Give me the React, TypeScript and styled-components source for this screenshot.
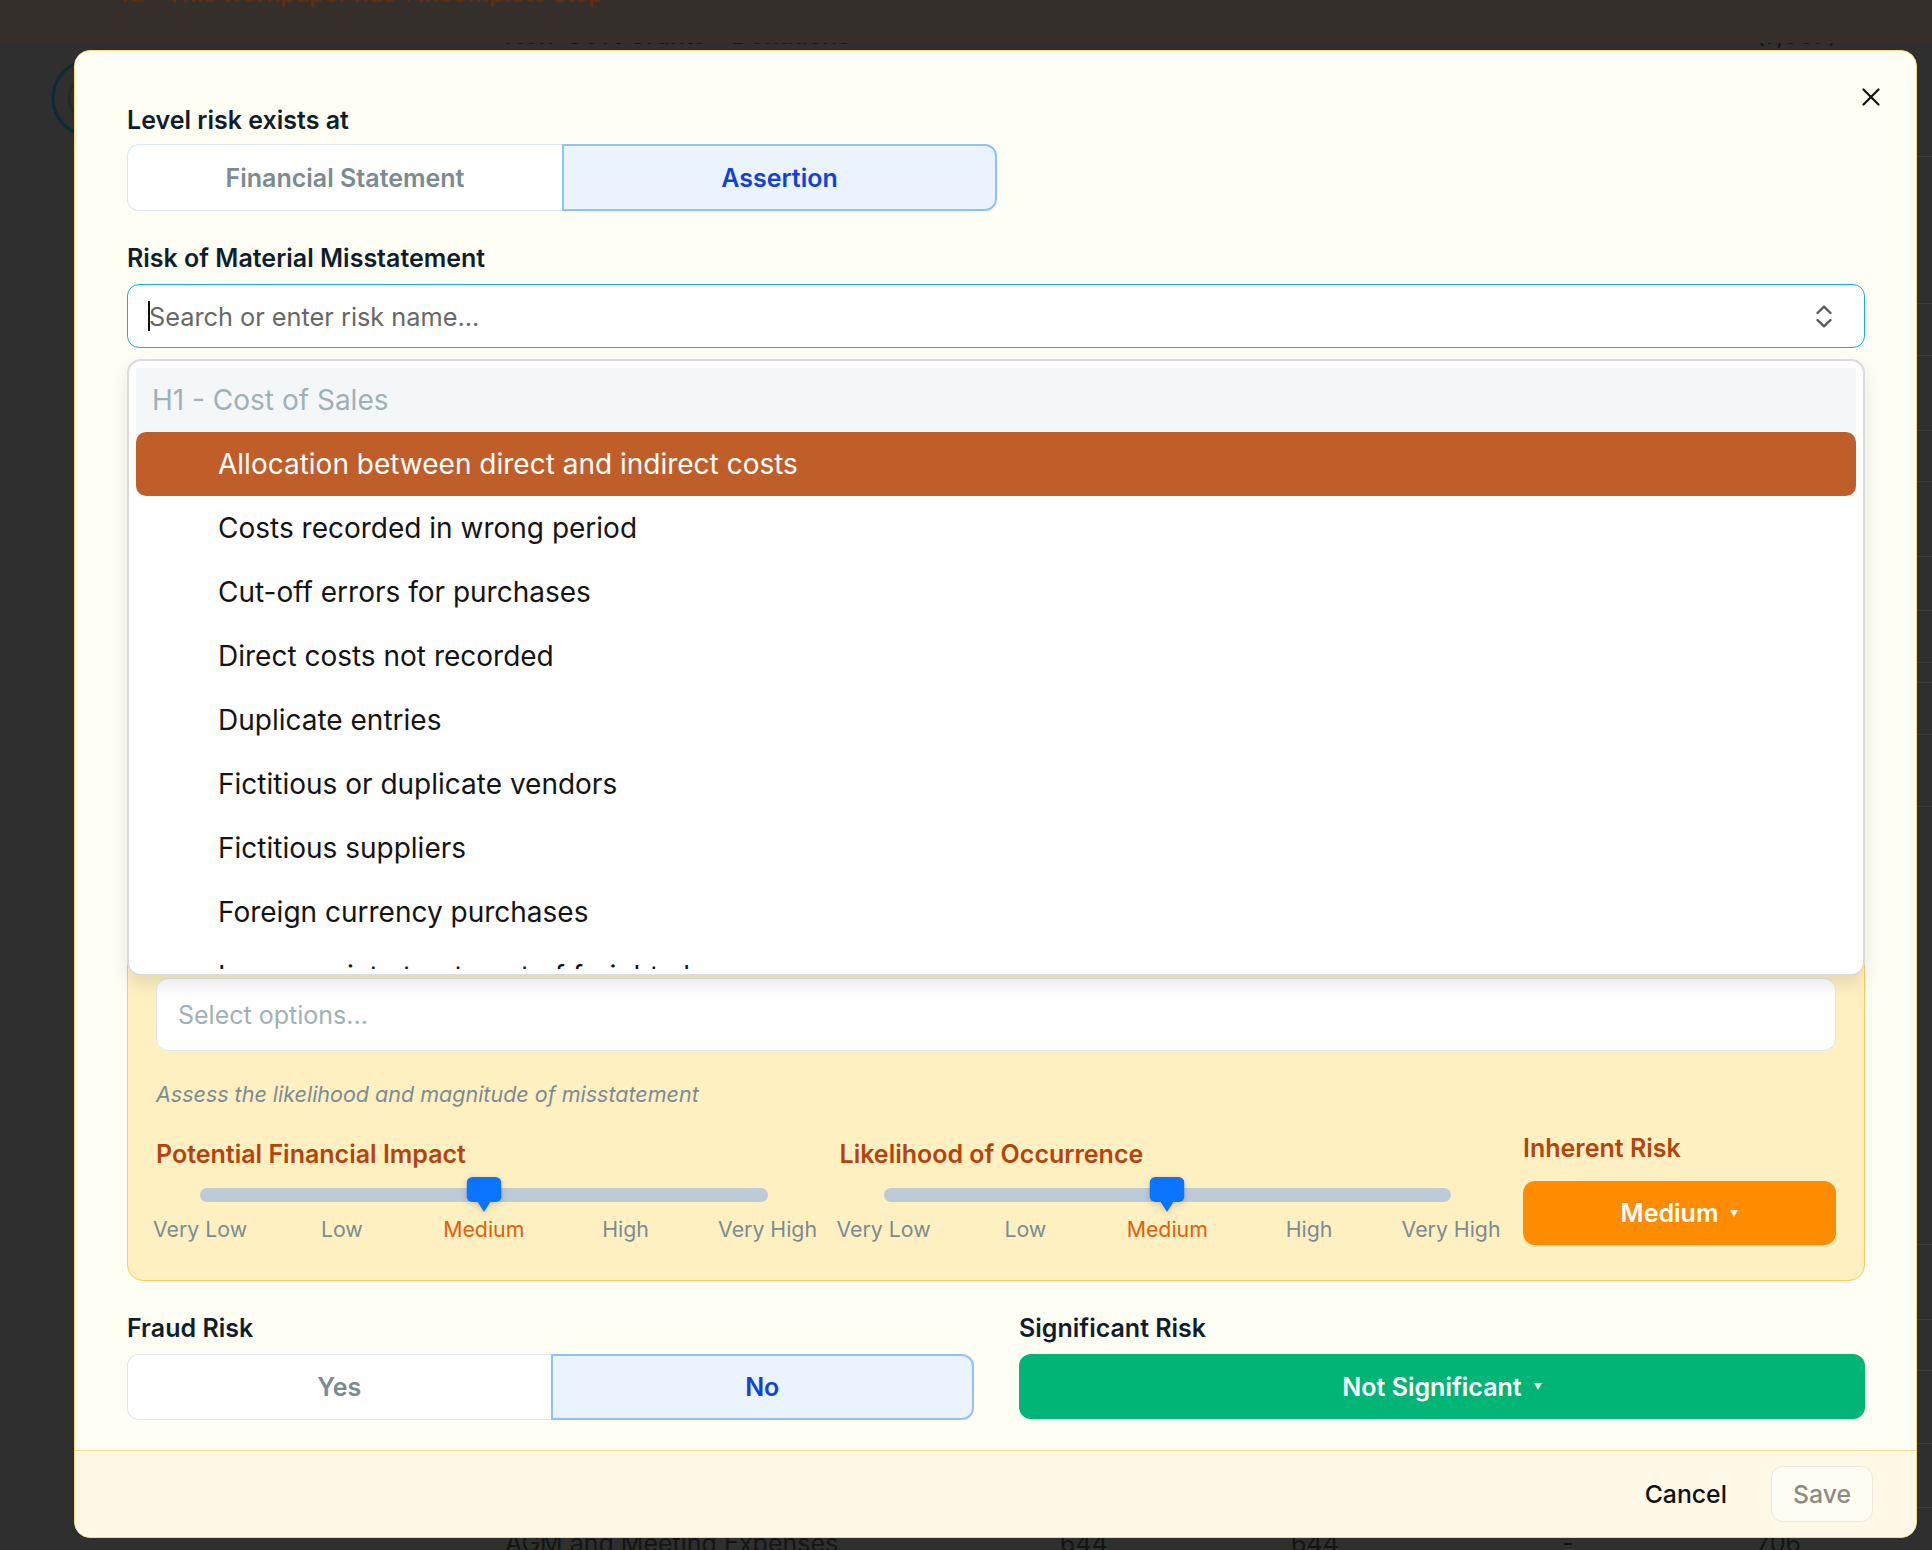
import React from "react";
import styled, { createGlobalStyle } from "styled-components";

const GlobalStyle = createGlobalStyle`
  html, body { margin: 0; padding: 0; }
  body {
    width: 1932px;
    height: 1550px;
    overflow: hidden;
    background: #2e2f2e;
    font-family: Inter, "Noto Sans", "Liberation Sans", sans-serif;
  }
  * { box-sizing: border-box; }
`;

/* ---------- background page ---------- */

const Page = styled.div`
  position: relative;
  width: 1932px;
  height: 1550px;
  overflow: hidden;
  background: #2e2f2e;
  display: flex;
  flex-direction: column;
`;

const TopBar = styled.div`
  position: relative;
  z-index: 1;
  height: 43px;
  flex: none;
  background: #352f2b;
  display: flex;
  align-items: flex-start;
  padding-left: 120px;
  overflow: hidden;
`;

const TopBarInner = styled.div`
  margin-top: -22px;
  display: flex;
  align-items: center;
  gap: 20px;
  color: #5e2e10;
  font-size: 24px;
  font-weight: 600;
  line-height: 32px;
`;

const MainArea = styled.div`
  flex: 1;
  display: flex;
  min-height: 0;
`;

const Rail = styled.div`
  width: 100px;
  flex: none;
  padding-top: 14px;
  padding-left: 50px;
`;

const Table = styled.div`
  flex: 1;
  display: flex;
  flex-direction: column;
`;

const TRow = styled.div<{ $h: number; $top?: boolean }>`
  height: ${(p) => p.$h}px;
  flex: none;
  border-bottom: 1px solid #3a3b3a;
  display: grid;
  grid-template-columns: 405px 555px 231px 271px 194px 1fr;
  align-items: ${(p) => (p.$top ? "start" : "center")};
  color: #151515;
  font-size: 25px;
  line-height: 30px;
  white-space: nowrap;
`;

const TCell = styled.div<{ $lift?: boolean }>`
  margin-top: ${(p) => (p.$lift ? "-23px" : "0")};
`;

/* ---------- modal ---------- */

const Modal = styled.div`
  position: absolute;
  left: 74px;
  top: 50px;
  width: 1843px;
  background: #fffef5;
  border: 1px solid #f6dc7c;
  border-radius: 16px;
  overflow: hidden;
  display: flex;
  flex-direction: column;
  z-index: 2;
  font-family: Inter, "Noto Sans", "Liberation Sans", sans-serif;
`;

const CloseButton = styled.button`
  position: absolute;
  top: 37px;
  right: 36px;
  width: 18px;
  height: 18px;
  padding: 0;
  border: none;
  background: transparent;
  display: flex;
  cursor: pointer;
`;

const Body = styled.div`
  padding: 53px 51px 30px 52px;
  display: flex;
  flex-direction: column;
  gap: 31px;
`;

const Field = styled.div<{ $gap?: number }>`
  display: flex;
  flex-direction: column;
  gap: ${(p) => (p.$gap ?? 10)}px;
`;

const Label = styled.div`
  font-size: 25px;
  font-weight: 600;
  line-height: 32px;
  color: #0f1e2c;
`;

const Segmented = styled.div<{ $width: number; $height: number }>`
  display: grid;
  grid-template-columns: 1fr 1fr;
  width: ${(p) => p.$width}px;
  height: ${(p) => p.$height}px;
`;

const Segment = styled.button<{ $active?: boolean; $first?: boolean }>`
  font-family: inherit;
  font-size: 25px;
  font-weight: 600;
  padding: 0;
  cursor: pointer;
  border-radius: ${(p) => (p.$first ? "12px 0 0 12px" : "0 12px 12px 0")};
  border: ${(p) => (p.$active ? "2.5px solid #8fc2fb" : "1.5px solid #dde8ef")};
  ${(p) => (p.$first && !p.$active ? "border-right: none;" : "")}
  background: ${(p) => (p.$active ? "#eaf3fe" : "#ffffff")};
  color: ${(p) => (p.$active ? "#1142d8" : "#7a8b91")};
`;

const ComboWrap = styled.div`
  position: relative;
`;

const ComboInput = styled.div`
  height: 64px;
  border: 1.5px solid #14b1d8;
  border-radius: 12px;
  background: #ffffff;
  display: flex;
  align-items: center;
  justify-content: space-between;
  padding: 0 32px 0 20px;
`;

const Placeholder = styled.span`
  display: flex;
  align-items: center;
  font-size: 25.3px;
  color: #676767;
`;

const Caret = styled.span`
  display: inline-block;
  width: 2px;
  height: 30px;
  background: #111;
  margin-right: -1px;
`;

const Dropdown = styled.div`
  position: absolute;
  left: 0;
  right: 0;
  top: calc(100% + 11px);
  background: #ffffff;
  border: 2px solid #dcdcdc;
  border-radius: 14px;
  padding: 7px 7px 5px;
  box-shadow: 0 8px 18px rgba(0, 0, 0, 0.1);
  z-index: 5;
`;

const OptionList = styled.div`
  height: 601px;
  overflow: hidden;
`;

const GroupHeader = styled.div`
  height: 64px;
  background: #f4f7f9;
  padding-left: 16px;
  display: flex;
  align-items: center;
  font-size: 28px;
  color: #9fb0b7;
`;

const Option = styled.div<{ $active?: boolean }>`
  height: 64px;
  padding-left: 82px;
  border-radius: 10px;
  display: flex;
  align-items: center;
  font-size: 28px;
  white-space: nowrap;
  color: ${(p) => (p.$active ? "#ffffff" : "#141414")};
  background: ${(p) => (p.$active ? "#c05e2a" : "transparent")};
`;

const Panel = styled.div`
  background: #fff0c2;
  border: 1px solid #f8cf55;
  border-radius: 16px;
  padding: 28px 28px 37px;
  display: flex;
  flex-direction: column;
  gap: 28px;
`;

const TextArea = styled.div<{ $h: number }>`
  height: ${(p) => p.$h}px;
  background: #ffffff;
  border: 1px solid #dfe8ee;
  border-radius: 12px;
`;

const SelectBox = styled.div`
  height: 73px;
  background: #ffffff;
  border: 1px solid #dfe8ee;
  border-radius: 12px;
  display: flex;
  align-items: center;
  padding-left: 21px;
  font-size: 25px;
  color: #9fb1b8;
`;

const Hint = styled.div`
  font-size: 21.5px;
  font-style: italic;
  line-height: 31px;
  color: #7b8c92;
`;

const SliderRow = styled.div`
  display: grid;
  grid-template-columns: 1fr 1fr 313px;
  column-gap: 28px;
  align-items: start;
`;

const SliderGroup = styled.div`
  display: flex;
  flex-direction: column;
`;

const GroupLabel = styled.div`
  font-size: 25px;
  font-weight: 600;
  line-height: 32px;
  color: #b4440e;
  white-space: nowrap;
`;

const SliderArea = styled.div`
  position: relative;
  height: 35px;
  margin: 7px 44px 0;
`;

const Track = styled.div`
  position: absolute;
  left: 0;
  right: 0;
  top: 11px;
  height: 14px;
  border-radius: 7px;
  background: #bdcad7;
`;

const Thumb = styled.div`
  position: absolute;
  top: 0;
  width: 35px;
  height: 35px;
  transform: translateX(-50%);
  filter: drop-shadow(0 2px 3px rgba(0, 0, 0, 0.18));
  display: flex;
`;

const Ticks = styled.div`
  display: flex;
  justify-content: space-between;
  margin-top: 4px;
`;

const Tick = styled.div<{ $active?: boolean }>`
  width: 88px;
  display: flex;
  justify-content: center;
  white-space: nowrap;
  font-size: 21.3px;
  line-height: 27px;
  color: ${(p) => (p.$active ? "#e0600b" : "#7b8c92")};
`;

const InherentCol = styled.div`
  margin: -6px 0 -2px;
  display: flex;
  flex-direction: column;
  gap: 17px;
`;

const PillButton = styled.button<{ $bg: string; $h: number }>`
  height: ${(p) => p.$h}px;
  width: 100%;
  border: none;
  border-radius: 12px;
  background: ${(p) => p.$bg};
  color: #ffffff;
  font-family: inherit;
  font-size: 25px;
  font-weight: 600;
  display: flex;
  align-items: center;
  justify-content: center;
  gap: 12px;
  cursor: pointer;
`;

const BottomRow = styled.div`
  display: grid;
  grid-template-columns: 1fr 1fr;
  column-gap: 45px;
`;

const Footer = styled.div`
  height: 87px;
  border-top: 1px solid #fbe08a;
  background: #fff8e6;
  display: flex;
  align-items: center;
  justify-content: flex-end;
  gap: 22px;
  padding-right: 43px;
`;

const GhostButton = styled.button`
  height: 56px;
  padding: 0 22px;
  border: none;
  background: transparent;
  font-family: inherit;
  font-size: 24.8px;
  font-weight: 500;
  color: #111111;
  cursor: pointer;
`;

const SaveButton = styled.button`
  height: 56px;
  padding: 0 21px;
  border: 1.5px solid #ece8dc;
  border-radius: 12px;
  background: #fffcf3;
  font-family: inherit;
  font-size: 24.8px;
  font-weight: 500;
  color: #8d8c84;
`;

/* ---------- icons ---------- */

const CloseIcon = () => (
  <svg width="18" height="18" viewBox="0 0 18 18">
    <path d="M1.5 1.5 L16.5 16.5 M16.5 1.5 L1.5 16.5" stroke="#111" strokeWidth="2.2" strokeLinecap="round" />
  </svg>
);

const ChevronsIcon = () => (
  <svg width="16" height="23" viewBox="0 0 16 23">
    <path
      d="M1.5 8 L8 1.6 L14.5 8 M1.5 15 L8 21.4 L14.5 15"
      stroke="#585858"
      strokeWidth="2.3"
      fill="none"
      strokeLinecap="round"
      strokeLinejoin="round"
    />
  </svg>
);

const Caret8 = () => (
  <svg width="8" height="7" viewBox="0 0 8 7">
    <path d="M0 0 H8 L4 7 Z" fill="#ffffff" fillOpacity="0.88" />
  </svg>
);

const ThumbShape = () => (
  <svg width="35" height="35" viewBox="0 0 35 35">
    <rect x="0" y="0" width="35" height="25" rx="6" fill="#0a74ff" />
    <path d="M10.5 24 H24.5 L17.5 35 Z" fill="#0a74ff" />
  </svg>
);

const ListIcon = () => (
  <svg width="26" height="26" viewBox="0 0 24 24" fill="none" stroke="#5e2e10" strokeWidth="2.4" strokeLinecap="round">
    <path d="M3 6 L5 8 L8 4 M3 16 L5 18 L8 14 M12 6 H21 M12 12 H21 M12 18 H21" />
  </svg>
);

/* ---------- data ---------- */

const riskOptions = [
  "Allocation between direct and indirect costs",
  "Costs recorded in wrong period",
  "Cut-off errors for purchases",
  "Direct costs not recorded",
  "Duplicate entries",
  "Fictitious or duplicate vendors",
  "Fictitious suppliers",
  "Foreign currency purchases",
  "Inappropriate treatment of freight charges",
];

const levels = ["Very Low", "Low", "Medium", "High", "Very High"];

const bgRows: { h: number; cells?: string[]; top?: boolean }[] = [
  { h: 114, cells: ["Non-Govt Grants - Donations", "", "", "", "(7,007)"], top: true },
  { h: 147 },
  { h: 52 },
  { h: 75 },
  { h: 51 },
  { h: 75 },
  { h: 54 },
  { h: 52 },
  { h: 20 },
  { h: 52 },
  { h: 72 },
  { h: 438 },
  { h: 75 },
  { h: 51 },
  { h: 73 },
  { h: 64 },
  { h: 70, cells: ["AGM and Meeting Expenses", "644", "644", "-", "706"] },
];

function RiskSlider({ label, value }: { label: string; value: number }) {
  const pct = (value / (levels.length - 1)) * 100;
  return (
    <SliderGroup>
      <GroupLabel>{label}</GroupLabel>
      <SliderArea>
        <Track />
        <Thumb style={{ left: `${pct}%` }}>
          <ThumbShape />
        </Thumb>
      </SliderArea>
      <Ticks>
        {levels.map((l, i) => (
          <Tick key={l} $active={i === value}>
            {l}
          </Tick>
        ))}
      </Ticks>
    </SliderGroup>
  );
}

export default function App() {
  return (
    <>
      <GlobalStyle />
      <Page>
        <TopBar>
          <TopBarInner>
            <ListIcon />
            <span>This workpaper has 1 incomplete step</span>
          </TopBarInner>
        </TopBar>
        <MainArea>
          <Rail>
            <svg width="90" height="90" viewBox="0 0 90 90">
              <circle cx="41" cy="41" r="38" stroke="#0c2b33" strokeWidth="3" fill="none" />
              <circle cx="41" cy="41" r="22" stroke="#262a2a" strokeWidth="3" fill="none" />
            </svg>
          </Rail>
          <Table>
            {bgRows.map((r, i) => (
              <TRow key={i} $h={r.h} $top={r.top}>
                <div />
                {(r.cells || []).map((c, j) => (
                  <TCell key={j} $lift={r.top}>
                    {c}
                  </TCell>
                ))}
              </TRow>
            ))}
          </Table>
        </MainArea>

        <Modal>
          <CloseButton aria-label="Close">
            <CloseIcon />
          </CloseButton>
          <Body>
            <Field $gap={8}>
              <Label>Level risk exists at</Label>
              <Segmented $width={870} $height={67}>
                <Segment $first>Financial Statement</Segment>
                <Segment $active>Assertion</Segment>
              </Segmented>
            </Field>

            <Field>
              <Label>Risk of Material Misstatement</Label>
              <ComboWrap>
                <ComboInput>
                  <Placeholder>
                    <Caret />
                    Search or enter risk name...
                  </Placeholder>
                  <ChevronsIcon />
                </ComboInput>
                <Dropdown>
                  <OptionList>
                    <GroupHeader>H1 - Cost of Sales</GroupHeader>
                    {riskOptions.map((o, i) => (
                      <Option key={o} $active={i === 0}>
                        {o}
                      </Option>
                    ))}
                  </OptionList>
                </Dropdown>
              </ComboWrap>
            </Field>

            <Panel>
              <Field>
                <Label>Risk Description</Label>
                <TextArea $h={184} />
              </Field>
              <Field>
                <Label>Root Cause</Label>
                <TextArea $h={204} />
              </Field>
              <Field>
                <Label>Relevant Assertions</Label>
                <SelectBox>Select options...</SelectBox>
              </Field>
              <Hint>Assess the likelihood and magnitude of misstatement</Hint>
              <SliderRow>
                <RiskSlider label="Potential Financial Impact" value={2} />
                <RiskSlider label="Likelihood of Occurrence" value={2} />
                <InherentCol>
                  <GroupLabel>Inherent Risk</GroupLabel>
                  <PillButton $bg="#ff8c00" $h={64}>
                    Medium
                    <Caret8 />
                  </PillButton>
                </InherentCol>
              </SliderRow>
            </Panel>

            <BottomRow>
              <Field>
                <Label>Fraud Risk</Label>
                <Segmented $width={847} $height={66}>
                  <Segment $first>Yes</Segment>
                  <Segment $active>No</Segment>
                </Segmented>
              </Field>
              <Field>
                <Label>Significant Risk</Label>
                <PillButton $bg="#00b576" $h={65}>
                  Not Significant
                  <Caret8 />
                </PillButton>
              </Field>
            </BottomRow>
          </Body>
          <Footer>
            <GhostButton>Cancel</GhostButton>
            <SaveButton>Save</SaveButton>
          </Footer>
        </Modal>
      </Page>
    </>
  );
}
